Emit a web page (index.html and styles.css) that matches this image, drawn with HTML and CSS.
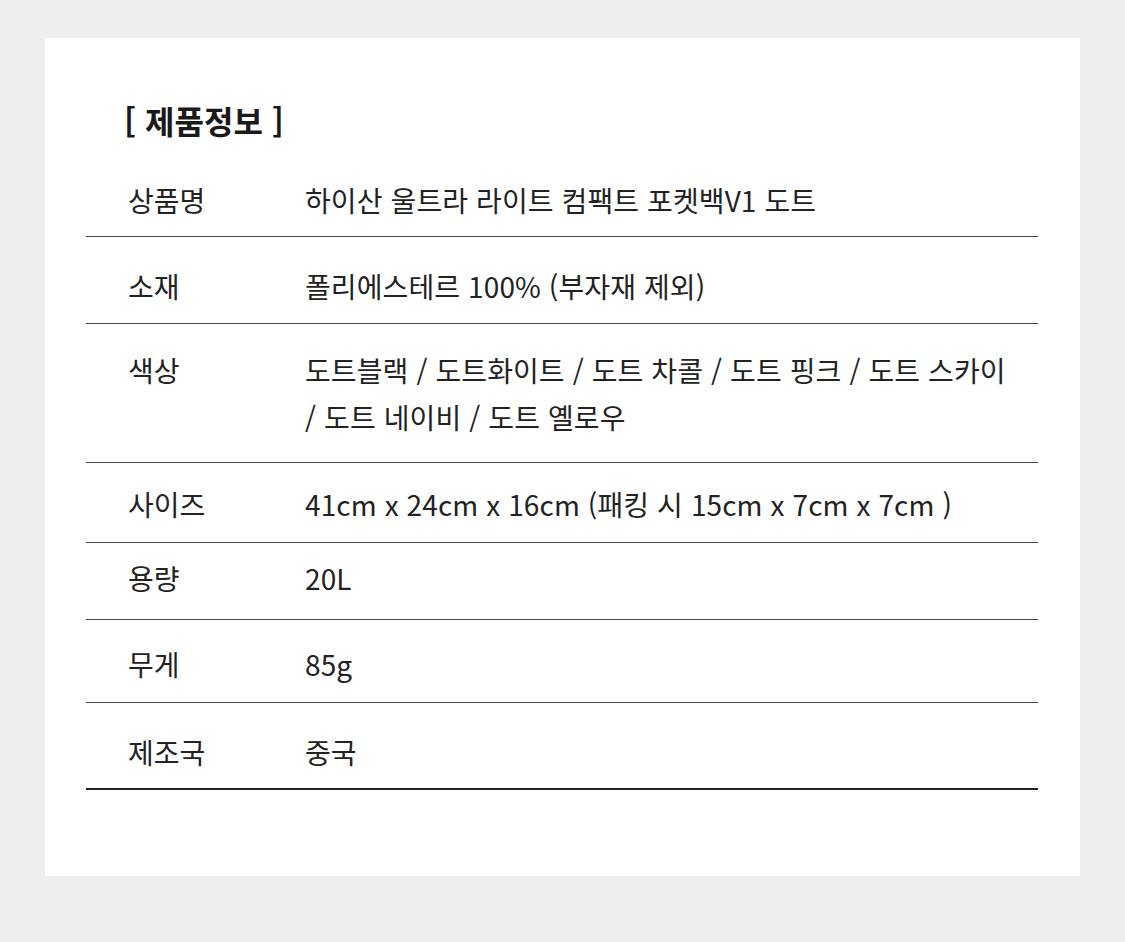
FILE: index.html
```html
<!DOCTYPE html>
<html lang="ko">
<head>
<meta charset="utf-8">
<title>제품정보</title>
<link rel="stylesheet" href="styles.css">
</head>
<body>
<div class="card">
  <h2 class="title">[ 제품정보 ]</h2>
  <div class="spec">
    <div class="row r1"><div class="label">상품명</div><div class="value">하이산 울트라 라이트 컴팩트 포켓백V1 도트</div></div>
    <div class="row r2"><div class="label">소재</div><div class="value">폴리에스테르 100% (부자재 제외)</div></div>
    <div class="row r3"><div class="label">색상</div><div class="value">도트블랙 / 도트화이트 / 도트 차콜 / 도트 핑크 / 도트 스카이<br>/ 도트 네이비 / 도트 옐로우</div></div>
    <div class="row r4"><div class="label">사이즈</div><div class="value">41cm x 24cm x 16cm (패킹 시 15cm x 7cm x 7cm )</div></div>
    <div class="row r5"><div class="label">용량</div><div class="value">20L</div></div>
    <div class="row r6"><div class="label">무게</div><div class="value">85g</div></div>
    <div class="row r7"><div class="label">제조국</div><div class="value">중국</div></div>
  </div>
</div>
</body>
</html>
```
FILE: styles.css
```css
html, body {
  margin: 0;
  padding: 0;
  background: #eeeeee;
}
body {
  padding: 38px 45px 66px;
  font-family: "Noto Sans CJK KR", "Noto Sans", sans-serif;
  color: #222222;
}
.card {
  width: 1035px;
  height: 838px;
  box-sizing: border-box;
  background: #ffffff;
  padding: 62px 42px 0 41px;
}
.title {
  margin: 0;
  padding-left: 38px;
  font-size: 32px;
  line-height: 40px;
  font-weight: 700;
  color: #1a1a1a;
}
.spec {
  display: flex;
  flex-direction: column;
}
.row {
  display: grid;
  grid-template-columns: 177px 1fr;
  padding-left: 42px;
  font-size: 28px;
  line-height: 47px;
  border-bottom: 1px solid #4a4a4a;
}
.label, .value {
  white-space: nowrap;
}
.value {
  letter-spacing: 0.1px;
}
.r1 { padding: 37px 0 12px 42px; }
.r2 { padding: 26px 0 13px 42px; }
.r3 { padding: 23px 0 21px 42px; }
.r4 { padding: 18px 0 14px 42px; }
.r5 { padding: 12px 0 17px 42px; }
.r6 { padding: 21px 0 14px 42px; }
.r7 { padding: 26px 0 12px 42px; border-bottom: 2px solid #222222; }
```
